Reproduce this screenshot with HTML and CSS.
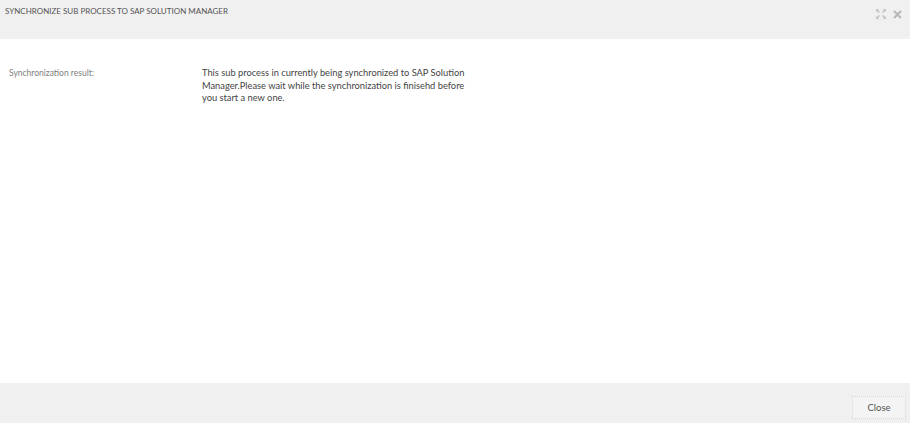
FILE: index.html
```html
<!DOCTYPE html>
<html lang="en">
<head>
    <meta charset="UTF-8">
    <meta name="viewport" content="width=device-width, initial-scale=1.0">
    <title>Synchronize Sub Process</title>
    <link rel="stylesheet" href="styles.css">
</head>
<body>

<div class="dialog">
    <div class="dialog-header">
        <h2 class="dialog-title">Synchronize sub process to SAP Solution Manager</h2>
        <div class="header-tools">
            <svg class="tool-icon" width="10" height="10" viewBox="0 0 10 10">
                <path d="M0 0 L3.5 3.5 M0 0 H2.6 M0 0 V2.6
                         M10 0 L6.5 3.5 M10 0 H7.4 M10 0 V2.6
                         M0 10 L3.5 6.5 M0 10 H2.6 M0 10 V7.4
                         M10 10 L6.5 6.5 M10 10 H7.4 M10 10 V7.4"
                      stroke="#c4c4c4" stroke-width="1.6" fill="none"/>
            </svg>
            <svg class="tool-icon" width="9" height="9" viewBox="0 0 9 9">
                <path d="M1 1 L8 8 M8 1 L1 8" stroke="#b8b8b8" stroke-width="2.2" fill="none"/>
            </svg>
        </div>
    </div>

    <div class="dialog-body">
        <div class="result-row">
            <div class="result-label">Synchronization result:</div>
            <div class="result-text">This sub process in currently being synchronized to SAP Solution Manager.Please wait while the synchronization is finisehd before you start a new one.</div>
        </div>
    </div>

    <div class="dialog-footer">
        <button type="button" class="close-btn">Close</button>
    </div>
</div>

</body>
</html>
```

FILE: styles.css
```css
body {
    font-family: Lato, Arial, sans-serif;
    margin: 0;
    padding: 0;
    background-color: #fff;
    color: #444;
}

.dialog {
    display: flex;
    flex-direction: column;
    width: 910px;
    height: 423px;
}

.dialog-header {
    display: flex;
    justify-content: space-between;
    align-items: flex-start;
    height: 39px;
    background-color: #f0f0f0;
    border-bottom: 2px dotted #f3f3f3;
    box-sizing: border-box;
}

.dialog-title {
    margin: 0;
    padding: 6px 0 0 5px;
    font-size: 8px;
    font-weight: normal;
    text-transform: uppercase;
    color: #555;
}

.header-tools {
    display: flex;
    align-items: center;
    gap: 7px;
    padding: 9px 8px 0 0;
}

.dialog-body {
    flex: 1;
    padding: 28px 0 0 9px;
}

.result-row {
    display: flex;
    font-size: 9.3px;
    line-height: 12.5px;
}

.result-label {
    width: 193px;
    color: #808080;
    font-size: 8.5px;
}

.result-text {
    width: 266px;
    color: #444;
}

.dialog-footer {
    display: flex;
    justify-content: flex-end;
    align-items: center;
    height: 40px;
    background-color: #f0f0f0;
    padding-right: 4px;
}

.close-btn {
    width: 54px;
    height: 23px;
    margin-top: 8px;
    background-color: #f4f4f4;
    border: 1px dotted #d6d6d6;
    font-family: Lato, Arial, sans-serif;
    font-size: 9.5px;
    color: #555;
    cursor: pointer;
}
```
